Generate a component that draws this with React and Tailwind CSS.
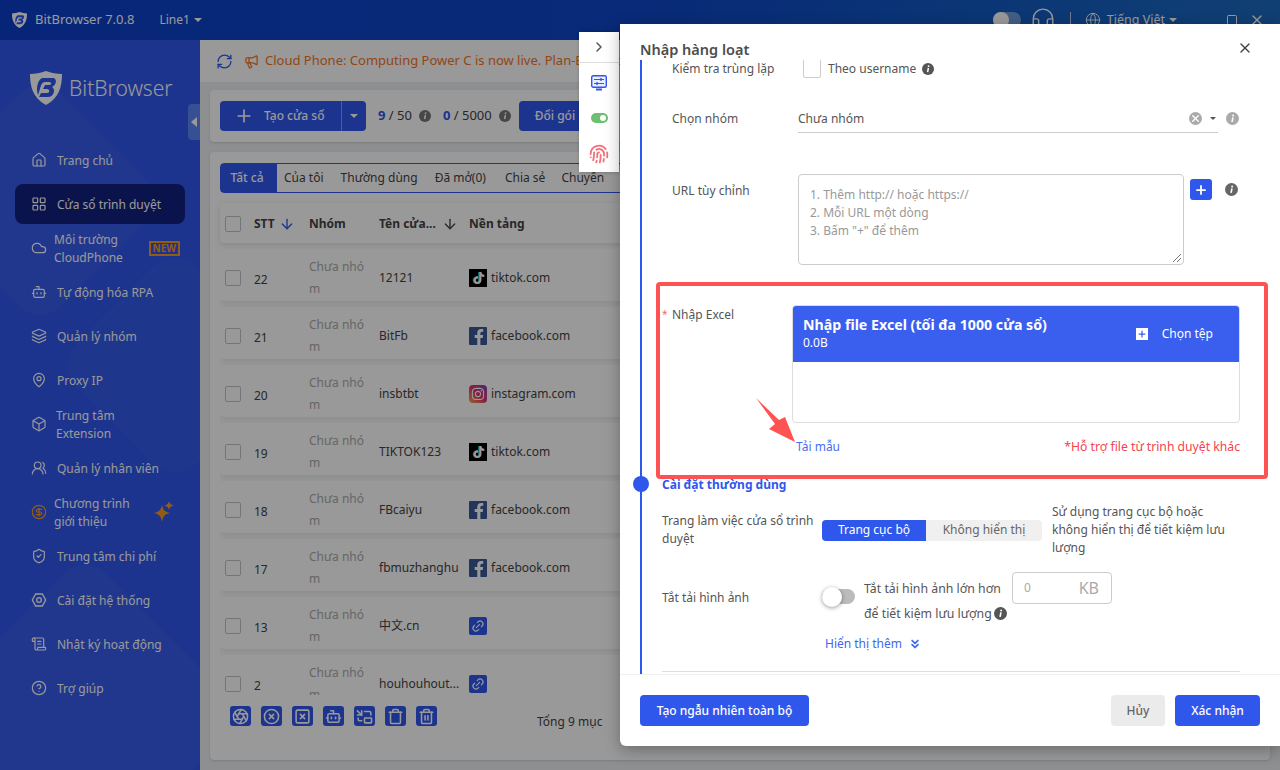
import React from "react";
import {
  Aperture,
  ArrowDown,
  Bot,
  Box,
  ChevronRight,
  ChevronsDown,
  CircleDollarSign,
  CircleHelp,
  CircleX,
  Cloud,
  Fingerprint,
  Globe,
  Headset,
  House,
  Layers,
  LayoutGrid,
  Link2,
  MapPin,
  Megaphone,
  PictureInPicture,
  Plus,
  RefreshCw,
  ScrollText,
  ShieldCheck,
  Square,
  SquareX,
  Trash,
  Trash2,
  UsersRound,
  X,
} from "lucide-react";
import { FaFacebookF, FaInstagram, FaTiktok } from "react-icons/fa";

const Logo = ({ className }) => (
  <svg viewBox="0 0 32 34" className={className}>
    <path d="M16 0 C21 2 27 3 32 3 C32 16 29 27 16 34 C3 27 0 16 0 3 C5 3 11 2 16 0Z" fill="#fff" />
    <path
      d="M12 7 H23 C27 7 27 14 22 16 C26 18 24 26 18 26 H9 L11 22 H17 C20 22 20 18 17 18 H13 L15 14 H19 C22 14 22 11 19 11 H15 C12 11 11 14 10 18 L8 24 C6 18 7 10 12 7Z"
      fill="#3057ec"
    />
  </svg>
);

const Hexagon = ({ className }) => (
  <svg viewBox="0 0 24 24" fill="none" stroke="currentColor" strokeWidth="2" className={className}>
    <path d="M7 3h10l5 9-5 9H7l-5-9z" />
    <circle cx="12" cy="12" r="3.5" />
  </svg>
);

const Stars = () => (
  <svg viewBox="0 0 20 22" className="ml-auto mr-[11px] h-[22px] w-5 fill-[#f59a23]">
    <path d="M8 4 C9 9 11 11 16 12 C11 13 9 15 8 21 C7 15 5 13 0 12 C5 11 7 9 8 4Z" />
    <path d="M15 0 C15.5 2.5 17 4 20 4.5 C17 5 15.5 6.5 15 9 C14.5 6.5 13 5 10 4.5 C13 4 14.5 2.5 15 0Z" />
  </svg>
);

const navItems = [
  { icon: House, label: "Trang chủ" },
  { icon: LayoutGrid, label: "Cửa sổ trình duyệt", active: true },
  { icon: Cloud, label: "Môi trường CloudPhone", textClass: "-ml-[3px] w-[80px]", isNew: true },
  { icon: Bot, label: "Tự động hóa RPA" },
  { icon: Layers, label: "Quản lý nhóm" },
  { icon: MapPin, label: "Proxy IP" },
  { icon: Box, label: "Trung tâm Extension", textClass: "-ml-px w-[76px]" },
  { icon: UsersRound, label: "Quản lý nhân viên" },
  { icon: CircleDollarSign, label: "Chương trình giới thiệu", textClass: "-ml-[3px] w-[80px]", orange: true },
  { icon: ShieldCheck, label: "Trung tâm chi phí" },
  { icon: Hexagon, label: "Cài đặt hệ thống" },
  { icon: ScrollText, label: "Nhật ký hoạt động" },
  { icon: CircleHelp, label: "Trợ giúp" },
];

const rows = [
  { id: 22, name: "12121", site: "tiktok" },
  { id: 21, name: "BitFb", site: "facebook" },
  { id: 20, name: "insbtbt", site: "instagram" },
  { id: 19, name: "TIKTOK123", site: "tiktok" },
  { id: 18, name: "FBcaiyu", site: "facebook" },
  { id: 17, name: "fbmuzhanghu", site: "facebook" },
  { id: 13, name: "中文.cn", site: "link" },
  { id: 2, name: "houhouhout...", site: "link" },
];

const SiteIcon = ({ site }) => {
  if (site === "tiktok") {
    return (
      <span className="relative flex h-[18px] w-[18px] items-center justify-center bg-black">
        <FaTiktok className="absolute left-[3px] top-[3px] h-3 w-3 text-[#25f4ee]" />
        <FaTiktok className="absolute left-[4px] top-[3px] h-3 w-3 text-[#fe2c55]" />
        <FaTiktok className="absolute left-[3.5px] top-[3px] h-3 w-3 text-white" />
      </span>
    );
  }
  if (site === "facebook") {
    return (
      <span className="flex h-[18px] w-[18px] items-end justify-end overflow-hidden rounded-[1px] bg-[#3b5998]">
        <FaFacebookF className="h-4 w-4 text-white" />
      </span>
    );
  }
  if (site === "instagram") {
    return (
      <span className="flex h-[18px] w-[18px] items-center justify-center rounded-[4px] bg-gradient-to-tr from-[#f9a03c] via-[#e1306c] to-[#833ab4]">
        <FaInstagram className="h-[14px] w-[14px] text-white" />
      </span>
    );
  }
  return (
    <span className="flex h-[18px] w-[18px] items-center justify-center rounded-[2px] bg-[#3057ec]">
      <Link2 className="h-[14px] w-[14px] -rotate-45 text-white" />
    </span>
  );
};

const siteNames = { tiktok: "tiktok.com", facebook: "facebook.com", instagram: "instagram.com", link: "" };

const Sidebar = () => (
  <aside className="relative h-[730px] w-[200px] shrink-0 overflow-hidden bg-[#3057ec] text-[12px] text-white">
    <div className="absolute -left-[50px] top-[70px] h-[180px] w-[180px] rotate-45 rounded-[30px] bg-white/[0.03]" />
    <div className="absolute left-[90px] top-[240px] h-[170px] w-[170px] rotate-45 rounded-[30px] bg-white/[0.02]" />
    <div className="absolute -left-[30px] top-[560px] h-[230px] w-[230px] rotate-45 rounded-[30px] bg-white/[0.04]" />
    <div className="relative mb-[33px] flex h-[65px] items-end gap-[7px] pl-[30px]">
      <Logo className="h-[34px] w-[32px]" />
      <span className="text-[21px] font-light leading-[34px]">BitBrowser</span>
    </div>
    <nav className="relative px-[15px]">
      {navItems.map((item) => {
        const Icon = item.icon;
        return (
          <div key={item.label} className="flex h-11 items-center">
            <div className={`flex h-10 w-full items-center gap-[10px] rounded-lg pl-4 ${item.active ? "bg-[#12207f]" : ""}`}>
              <Icon className={`h-4 w-4 shrink-0 ${item.orange ? "text-[#f59a23]" : ""}`} strokeWidth={1.8} />
              <span className={`pt-0.5 leading-[18px] ${item.textClass || ""}`}>{item.label}</span>
              {item.isNew && (
                <span className="ml-auto mr-[5px] border-2 border-[#f59a23] px-[2px] text-[10px] font-bold leading-[11px] text-[#f59a23]">
                  NEW
                </span>
              )}
              {item.orange && <Stars />}
            </div>
          </div>
        );
      })}
    </nav>
  </aside>
);

const Checkbox = () => <span className="h-4 w-4 shrink-0 rounded-[2px] border border-[#c4c4c4] bg-white" />;

const InfoDot = ({ className = "h-3 w-3 fill-[#777]" }) => (
  <svg viewBox="0 0 12 12" className={`inline-block shrink-0 ${className}`}>
    <circle cx="6" cy="6" r="6" />
    <circle cx="6.6" cy="3.2" r="0.9" fill="#fff" />
    <path d="M6.4 5 L5.6 9.2" stroke="#fff" strokeWidth="1.5" />
  </svg>
);

const Main = () => (
  <main className="flex h-[730px] w-[1080px] flex-col overflow-hidden bg-[#eceef1] text-[12px] text-[#444]">
    <div className="flex h-[42px] shrink-0 items-center bg-white pl-4">
      <RefreshCw className="h-[17px] w-[17px] text-[#3057ec]" strokeWidth={1.8} />
      <Megaphone className="ml-[11px] h-[15px] w-[15px] text-[#f5741f]" />
      <span className="ml-1.5 text-[13px] text-[#f5741f]">Cloud Phone: Computing Power C is now live. Plan-Based pricing available today.</span>
    </div>
    <div className="mx-2.5 mt-2 flex h-[52px] shrink-0 items-center rounded bg-white px-2.5 shadow-sm">
      <div className="flex h-[30px] w-[146px] items-center rounded bg-[#3057ec] text-white">
        <Plus className="ml-[14px] h-5 w-5" />
        <span className="ml-[10px] font-medium">Tạo cửa sổ</span>
        <span className="ml-auto flex h-full w-[25px] items-center justify-center border-l border-white/40">
          <span className="border-x-[4px] border-t-[4px] border-x-transparent border-t-white" />
        </span>
      </div>
      <span className="ml-3 text-[13px]">
        <b className="text-[#3057ec]">9</b> / 50
      </span>
      <InfoDot className="ml-[7px] h-3 w-3 fill-[#777]" />
      <span className="ml-3 text-[13px]">
        <b className="text-[#3057ec]">0</b> / 5000
      </span>
      <InfoDot className="ml-[7px] h-3 w-3 fill-[#777]" />
      <span className="ml-2 flex h-[30px] w-[100px] items-center rounded bg-[#3057ec] pl-4 font-medium text-white">Đổi gói</span>
    </div>
    <section className="mx-2.5 mt-2.5 flex h-[608px] shrink-0 flex-col rounded bg-white px-2.5 pt-[11px] shadow-sm">
      <div className="flex h-[30px] shrink-0 items-center rounded-sm border border-[#3057ec]">
        <span className="flex h-full w-[56px] items-center justify-center bg-[#3057ec] pr-1 font-medium text-white">Tất cả</span>
        <span className="ml-[7px]">Của tôi</span>
        <span className="ml-[17px]">Thường dùng</span>
        <span className="ml-[17px]">Đã mở(0)</span>
        <span className="ml-[19px]">Chia sẻ</span>
        <span className="ml-4">Chuyển</span>
      </div>
      <div className="mt-2.5 flex h-10 shrink-0 items-center rounded bg-white pl-[5px] pt-0.5 font-bold shadow-[0_2px_6px_rgba(0,0,0,0.12)]">
        <Checkbox />
        <span className="ml-[13px] flex w-[55px] items-center">
          STT <ArrowDown className="ml-1 h-4 w-4 text-[#3057ec]" />
        </span>
        <span className="w-[70px]">Nhóm</span>
        <span className="flex w-[90px] items-center">
          Tên cửa... <ArrowDown className="ml-1.5 h-4 w-4" />
        </span>
        <span>Nền tảng</span>
      </div>
      <div className="mt-1.5 flex h-[446px] shrink-0 flex-col gap-1.5 overflow-hidden">
        {rows.map((row) => (
          <div key={row.id} className="flex h-[52px] shrink-0 items-center rounded bg-white pl-[5px] pt-1.5 shadow-[0_2px_6px_rgba(0,0,0,0.1)]">
            <Checkbox />
            <span className="ml-[13px] w-[55px] pt-1">{row.id}</span>
            <span className="w-[60px] break-all leading-[22px] text-[#aaa]">Chưa nhóm</span>
            <span className="ml-2.5 w-[90px] truncate whitespace-nowrap">{row.name}</span>
            <span className="flex items-center gap-1">
              <SiteIcon site={row.site} />
              {siteNames[row.site]}
            </span>
          </div>
        ))}
      </div>
      <div className="mt-[11px] flex h-5 shrink-0 items-center pl-2.5">
        {[Aperture, CircleX, SquareX, Bot, PictureInPicture, Trash, Trash2].map((Icon, i) => (
          <span key={i} className="mr-[10px] flex h-5 w-[21px] items-center justify-center rounded-[3px] bg-[#3057ec]">
            <Icon className="h-[17px] w-[17px] text-white" strokeWidth={2.2} />
          </span>
        ))}
        <span className="ml-[90px] pt-3">Tổng 9 mục</span>
      </div>
    </section>
  </main>
);

const ImportDrawer = () => (
  <div className="absolute left-[620px] top-6 flex h-[722px] w-[660px] flex-col rounded-bl-md bg-white text-[12px] text-[#555] shadow-[0_4px_16px_rgba(0,0,0,0.3)]">
    <div className="flex h-9 shrink-0 items-end justify-between pb-px pl-5 pr-[27px]">
      <span className="text-[14.5px] font-semibold leading-5 text-[#4d4d4d]">Nhập hàng loạt</span>
      <X className="mb-[3px] h-4 w-4 text-[#444]" />
    </div>
    <div className="relative ml-5 h-[614px] shrink-0 overflow-hidden border-l-2 border-[#3057ec] pl-5 pr-10">
      <div className="pl-2.5">
        <div className="flex h-[18px] items-center">
          <span className="w-[131px] shrink-0">Kiểm tra trùng lặp</span>
          <span className="-mt-[3px] h-5 w-[18px] rounded-[2px] border border-[#ccc]" />
          <span className="ml-[7px]">Theo username</span>
          <InfoDot className="ml-1.5 h-3 w-3 fill-[#555]" />
        </div>
        <div className="mt-[26px] flex h-[29px] items-center">
          <span className="w-[126px] shrink-0 pt-px">Chọn nhóm</span>
          <div className="flex h-full w-[420px] items-center border-b border-[#ccc]">
            <span className="pt-px">Chưa nhóm</span>
            <X className="ml-auto h-[13px] w-[13px] rounded-full bg-[#aaa] p-px text-white" strokeWidth={3} />
            <span className="ml-[8px] mr-[2px] border-x-[3px] border-t-[3px] border-x-transparent border-t-[#555]" />
          </div>
          <InfoDot className="ml-2 h-[13px] w-[13px] fill-[#aaa]" />
        </div>
        <div className="mt-[41px] flex h-[91px] items-start">
          <span className="mt-2 w-[126px] shrink-0">URL tùy chỉnh</span>
          <div className="relative h-full w-[386px] rounded border border-[#ccc] px-[11px] pt-[11px] leading-[18px] text-[#999]">
            <p>1. Thêm http:// hoặc https://</p>
            <p>2. Mỗi URL một dòng</p>
            <p>3. Bấm "+" để thêm</p>
            <svg viewBox="0 0 8 8" className="absolute bottom-0.5 right-0.5 h-2 w-2 stroke-[#777]">
              <path d="M0 8 L8 0 M4 8 L8 4" />
            </svg>
          </div>
          <span className="ml-1.5 mt-[5px] flex h-[21px] w-[22px] items-center justify-center rounded-[3px] bg-[#3057ec]">
            <Plus className="h-3.5 w-3.5 text-white" strokeWidth={3} />
          </span>
          <InfoDot className="ml-[13px] mt-[9px] h-[13px] w-[13px] fill-[#666]" />
        </div>
        <div className="relative mt-10 flex h-[118px]">
          <span className="absolute -left-[10px] top-[2px] text-[10px] text-[#f56c6c]">*</span>
          <span className="mt-px w-[120px] shrink-0">Nhập Excel</span>
          <div className="h-full w-[448px] overflow-hidden rounded border border-[#ddd]">
            <div className="flex h-[56px] items-center justify-between bg-[#3a5eee] pb-0.5 pl-[10px] pr-[26px] text-white">
              <div>
                <p className="text-[14.2px] font-bold leading-5">Nhập file Excel (tối đa 1000 cửa sổ)</p>
                <p className="leading-4">0.0B</p>
              </div>
              <div className="flex items-center gap-[14px] pt-0.5">
                <span className="flex h-3 w-3 items-center justify-center bg-white">
                  <Plus className="h-2.5 w-2.5 text-[#3a5eee]" strokeWidth={3} />
                </span>
                Chọn tệp
              </div>
            </div>
          </div>
        </div>
        <div className="ml-[120px] mt-3.5 flex h-5 w-[448px] items-center justify-between">
          <span className="pl-1 text-[#4a6cf0]">Tải mẫu</span>
          <span className="text-[12.2px] text-[#f5444f]">*Hỗ trợ file từ trình duyệt khác</span>
        </div>
      </div>
      <div className="mt-[18px] h-5 font-bold leading-5 text-[#3057ec]">Cài đặt thường dùng</div>
      <div className="mt-2 flex h-[54px] items-center">
        <span className="w-[160px] shrink-0 leading-[18px]">Trang làm việc cửa sổ trình duyệt</span>
        <div className="flex h-[21px] w-[220px] shrink-0 items-center rounded-sm bg-[#f0f0f0]">
          <span className="flex h-full w-[104px] items-center justify-center rounded-l-sm bg-[#3057ec] text-white">Trang cục bộ</span>
          <span className="flex-1 text-center text-[#666]">Không hiển thị</span>
        </div>
        <span className="ml-2.5 w-[190px] leading-[18px]">Sử dụng trang cục bộ hoặc không hiển thị để tiết kiệm lưu lượng</span>
      </div>
      <div className="mt-[15px] flex h-[55px] items-start">
        <span className="mt-[17px] w-[160px] shrink-0 leading-[18px]">Tắt tải hình ảnh</span>
        <span className="relative mt-[17px] h-[15px] w-[33px] shrink-0 rounded-full bg-[#bbb]">
          <span className="absolute -top-[2px] left-0 h-[20px] w-[20px] rounded-full bg-white shadow-[0_1px_4px_rgba(0,0,0,0.4)]" />
        </span>
        <div className="ml-[9px] mt-1 w-[148px] text-[12.3px] leading-[25px]">
          Tắt tải hình ảnh lớn hơn để tiết kiệm lưu lượng
          <InfoDot className="ml-0.5 h-[13px] w-[13px] fill-[#555] align-[-2px]" />
        </div>
        <div className="flex h-8 w-[100px] items-center justify-between rounded border border-[#ccc] pl-[11px] pr-3 text-[#aaa]">
          <span>0</span>
          <span className="text-[16px]">KB</span>
        </div>
      </div>
      <div className="ml-[163px] mt-2 flex h-[18px] items-center gap-1.5 text-[#3f66f0]">
        Hiển thị thêm
        <ChevronsDown className="h-3.5 w-3.5" strokeWidth={3} />
      </div>
      <div className="mt-[18px] h-px bg-[#ddd]" />
    </div>
    <span className="absolute left-[13px] top-[452px] h-4 w-4 rounded-full bg-[#3057ec]" />
    <div className="flex h-[72px] shrink-0 items-start justify-between border-t border-[#f0f0f0] px-5 pt-[20px] font-medium">
      <span className="flex h-[31px] w-[169px] items-center justify-center rounded bg-[#3057ec] text-white">Tạo ngẫu nhiên toàn bộ</span>
      <div className="flex gap-2.5">
        <span className="flex h-[31px] w-[54px] items-center justify-center rounded bg-[#ebebeb] text-[#666]">Hủy</span>
        <span className="flex h-[31px] w-[85px] items-center justify-center rounded bg-[#3057ec] text-white">Xác nhận</span>
      </div>
    </div>
  </div>
);

export default function App() {
  return (
    <div className="relative h-[770px] w-[1280px] overflow-hidden font-['Noto_Sans','Noto_Sans_CJK_SC',sans-serif]">
      <header className="flex h-10 items-center bg-gradient-to-r from-[#0d3fc8] via-[#0f46c8] to-[#1c6ac0] text-white">
        <Logo className="ml-3 h-4 w-[15px]" />
        <span className="ml-2 text-[13px]">BitBrowser 7.0.8</span>
        <span className="ml-[25px] text-[12px]">Line1</span>
        <span className="ml-1 border-x-[4px] border-t-[4px] border-x-transparent border-t-white" />
        <div className="ml-auto flex items-center">
          <span className="relative h-4 w-7 rounded-full bg-white/40">
            <span className="absolute left-0 top-0 h-4 w-4 rounded-full bg-white" />
          </span>
          <Headset className="ml-[9px] h-[26px] w-[26px]" strokeWidth={1.3} />
          <span className="ml-3.5 h-4 w-px bg-white/70" />
          <Globe className="ml-3.5 h-4 w-4" strokeWidth={1.4} />
          <span className="ml-1.5 text-[12.5px]">Tiếng Việt</span>
          <span className="ml-1 border-x-[4px] border-t-[4px] border-x-transparent border-t-white" />
          <Square className="ml-[49px] h-4 w-3" />
          <X className="ml-[11px] mr-[15px] h-4 w-4" />
        </div>
      </header>
      <div className="flex">
        <Sidebar />
        <Main />
      </div>
      <span className="absolute left-[188px] top-[104px] flex h-9 w-3 items-center justify-center rounded-l bg-[#5a86f5]">
        <span className="border-y-[5px] border-r-[6px] border-y-transparent border-r-white" />
      </span>
      <div className="absolute inset-0 bg-black/40" />
      <div className="absolute left-[579px] top-8 flex h-[140px] w-10 flex-col items-center bg-white shadow-[1px_0_4px_rgba(0,0,0,0.3)]">
        <div className="flex h-[31px] w-full shrink-0 items-center justify-center border-b border-[#ddd]">
          <ChevronRight className="h-4 w-4 text-[#555]" strokeWidth={2.2} />
        </div>
        <svg viewBox="0 0 16 16" className="mt-3 h-4 w-4 shrink-0">
          <rect x="0.7" y="0.7" width="14.6" height="11.6" rx="1.5" fill="#e8edff" stroke="#3057ec" strokeWidth="1.4" />
          <path d="M5 14.5h6" stroke="#3057ec" strokeWidth="2" />
          <path d="M3 4.5h10M3 8.5h10" stroke="#3057ec" strokeWidth="1.2" />
          <path d="M10 3v3M6 7v3" stroke="#3057ec" strokeWidth="1.4" />
        </svg>
        <span className="mt-[22px] flex h-2.5 w-[17px] shrink-0 items-center justify-end rounded-full bg-[#6cc070] pr-[2px]">
          <span className="h-1.5 w-1.5 rounded-full bg-white" />
        </span>
        <Fingerprint className="mt-[21px] h-5 w-5 shrink-0 text-[#f4717a]" strokeWidth={2.2} />
      </div>
      <ImportDrawer />
      <div className="absolute left-[656px] top-[282px] h-[197px] w-[612px] rounded-sm border-4 border-[#ff5252]" />
      <svg viewBox="0 0 42 46" className="absolute left-[755px] top-[397px] h-[46px] w-[42px]">
        <path d="M1 1 L24 23 L30 20 L40 45 L14 32 L20 27Z" fill="#ff5252" />
      </svg>
    </div>
  );
}
